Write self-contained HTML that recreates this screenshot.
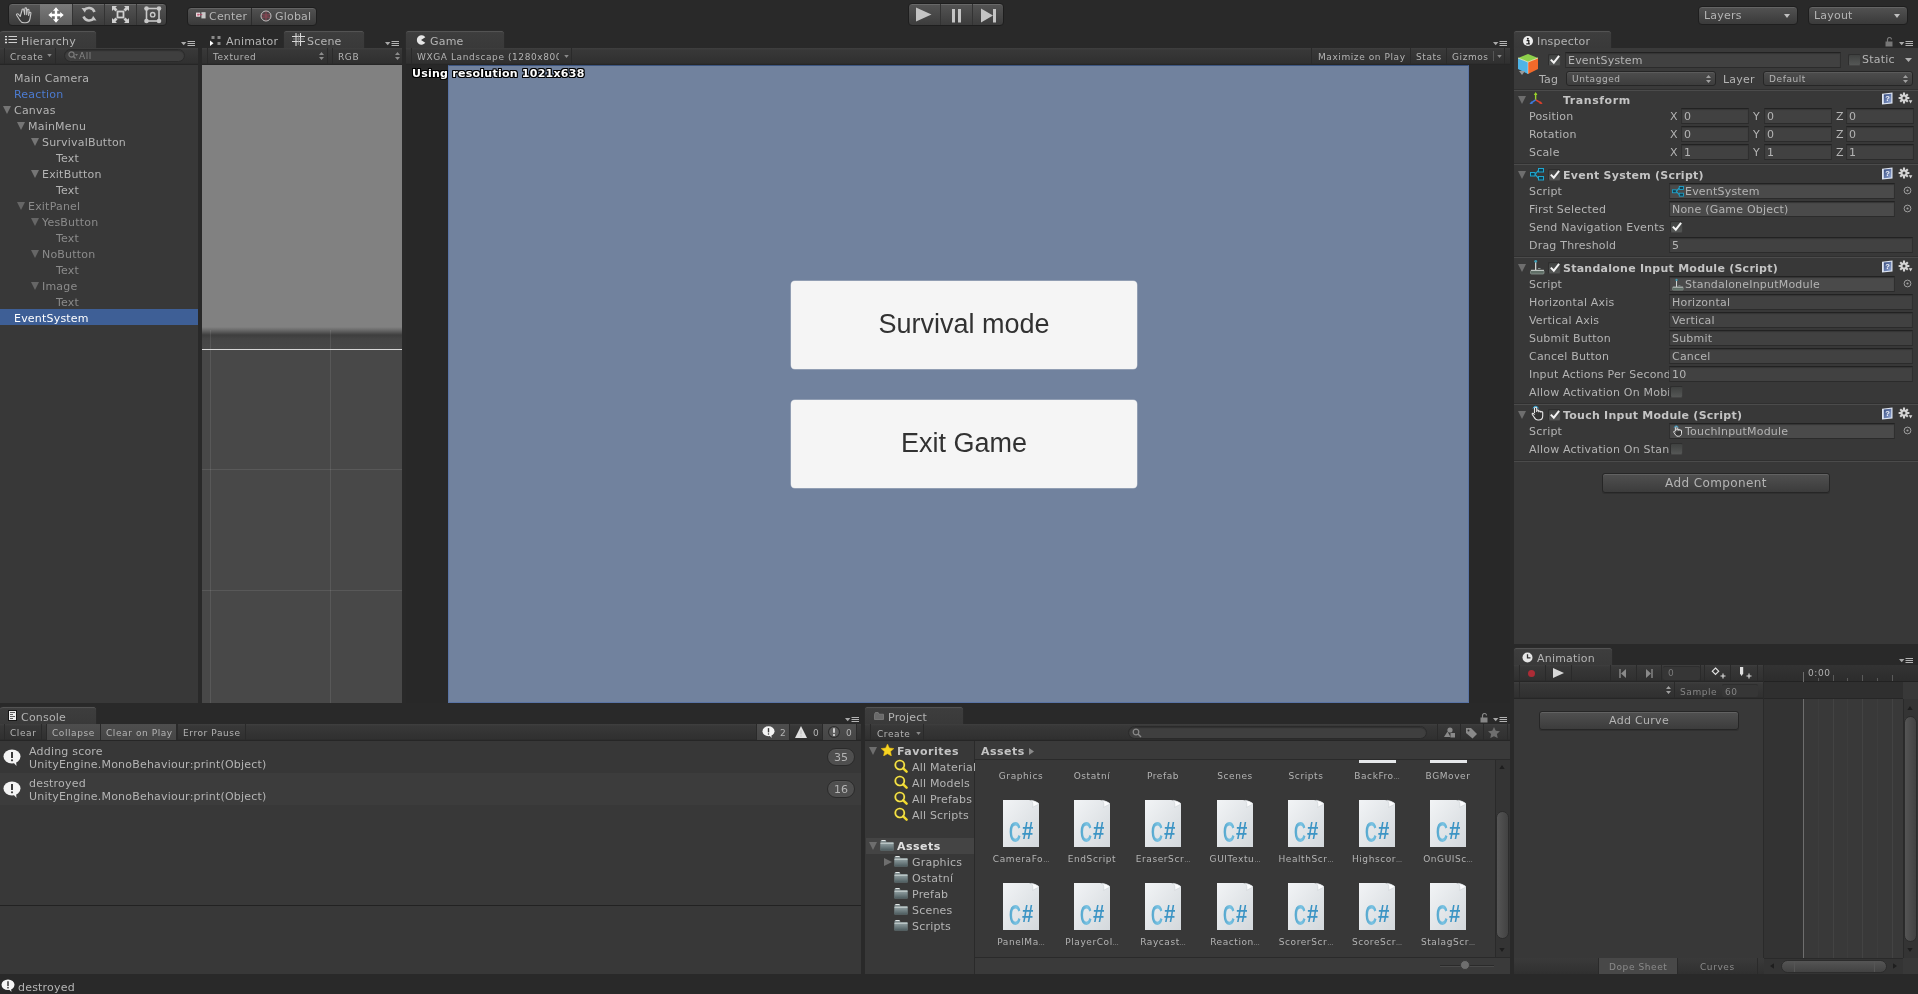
<!DOCTYPE html>
<html><head><meta charset="utf-8"><title>Unity</title>
<style>
html,body{margin:0;padding:0}
body{width:1918px;height:994px;overflow:hidden;background:#292929;position:relative;
 font-family:"DejaVu Sans","Liberation Sans",sans-serif;font-size:11px;letter-spacing:.2px;color:#b4b4b4;line-height:16px}
div,span,svg{position:absolute;box-sizing:border-box}
#root{left:0;top:0;width:1918px;height:994px;will-change:transform}
.t{white-space:nowrap;height:16px;line-height:16px;margin-top:1px}
.s{font-size:9px;letter-spacing:.58px}
.b{font-weight:bold;letter-spacing:.25px}
.panel{background:#383838}
.tab{height:19px;margin-top:-1px;background:linear-gradient(#444 0,#3d3d3d 2px,#393939 100%);border:1px solid #2b2b2b;border-bottom:none;border-radius:3px 3px 0 0;box-shadow:inset 0 1px 0 #535353}
.tabtxt{top:2px;line-height:17px;white-space:nowrap}
.tbar{height:17px;background:linear-gradient(#3f3f3f 0,#383838 2px,#303030 15px,#2a2a2a 16px,#222 17px)}
.tbtn{height:16px;top:0;line-height:16px;font-size:9px;letter-spacing:.58px;white-space:nowrap;border-left:1px solid #2a2a2a;border-right:1px solid #2a2a2a;padding:0 5px}
.tbtn.on{background:linear-gradient(#555,#484848)}
.menu{width:14px;height:6px}
.arrow{width:0;height:0;border-left:4.5px solid transparent;border-right:4.5px solid transparent;border-top:8px solid #757575}
.arrow.dim{border-top-color:#666}
.arrowr{width:0;height:0;border-top:4.5px solid transparent;border-bottom:4.5px solid transparent;border-left:8px solid #757575}
.fld{height:16px;background:#414141;border:1px solid #2f2f2f;border-top-color:#222;border-bottom-color:#2b2b2b;box-shadow:inset 0 1px 1px #353535;border-radius:1px;line-height:15px;white-space:nowrap;padding-left:2px;overflow:hidden}
.lbl{white-space:nowrap;line-height:16px;height:16px}
.sep{height:1px;background:#2a2a2a;border:0}
.chk{width:13px;height:12px;margin-top:1px;background:linear-gradient(#3f4140,#555756);border:1px solid #2e2e2e;border-right-color:#3c3c3c;border-bottom-color:#444;border-radius:2px}
.dim{color:#8c8c8c}

</style></head>
<body>
<div id="root">
<!-- top.html -->
<div id="topbar" style="left:0;top:0;width:1918px;height:31px;background:#292929"></div>
<!-- transform tools -->
<div style="left:8px;top:3px;width:159px;height:23px;border:1px solid #1e1e1e;border-radius:4px;background:linear-gradient(#545454,#3c3c3c);overflow:hidden;box-shadow:inset 0 1px 0 #686868">
  <div style="left:31px;top:0;width:1px;height:21px;background:#333"></div>
  <div style="left:63px;top:0;width:1px;height:21px;background:#333"></div>
  <div style="left:95px;top:0;width:1px;height:21px;background:#333"></div>
  <div style="left:127px;top:0;width:1px;height:21px;background:#333"></div>
  <div style="left:31px;top:0;width:32px;height:21px;background:linear-gradient(#7a7a7a,#5f5f5f)"></div>
</div>
<!-- hand -->
<svg style="left:15px;top:6px;width:18px;height:18px" viewBox="0 0 18 18"><path d="M5.2 10.5L3.3 8.2c-.9-1-2.3 0-1.6 1.100l3 4.700c1 1.7 2.3 2.8 4.3 2.800h1.500c2.6 0 4.1-1.7 4.5-4.200l.9-5.300c.2-1.2-1.3-1.5-1.6-.4l-.7 2.6.4-5.100c.1-1.2-1.5-1.4-1.7-.2l-.6 4.5-.1-5.900c0-1.2-1.7-1.2-1.7 0l-.2 5.9-1-5c-.2-1.2-1.8-.9-1.6.3z" fill="#3a3a3a" stroke="#c8c8c8" stroke-width="1.1" stroke-linejoin="round"/></svg>
<!-- move -->
<svg style="left:48px;top:7px;width:16px;height:16px" viewBox="0 0 16 16"><path d="M8 0.300l3 3.500H9.200v3h3V5l3.5 3-3.5 3V9.200h-3v3H11l-3 3.5-3-3.500h1.800v-3h-3V11L.3 8l3.5-3v1.800h3v-3H5z" fill="#fff"/></svg>
<!-- rotate -->
<svg style="left:81px;top:6px;width:16px;height:17px" viewBox="0 0 16 17"><path d="M13.5 6A6 6 0 0 0 3 4.5" fill="none" stroke="#c4c4c4" stroke-width="2.5"/><path d="M.5 2l4.8.3-1.3 4.500z" fill="#c4c4c4"/><path d="M2.5 10.500A6 6 0 0 0 13 12" fill="none" stroke="#c4c4c4" stroke-width="2.5"/><path d="M15.5 14.500l-4.8-.3 1.3-4.500z" fill="#c4c4c4"/></svg>
<!-- scale -->
<svg style="left:112px;top:6px;width:17px;height:17px" viewBox="0 0 17 17"><rect x="5.5" y="5.5" width="6" height="6" fill="none" stroke="#d0d0d0" stroke-width="1.8"/><path d="M0 0h5L3.5 1.5 5.5 3.5 3.5 5.5 1.5 3.5 0 5zM17 0v5L15.5 3.5 13.5 5.5 11.5 3.5 13.5 1.5 12 0zM0 17v-5l1.5 1.5 2-2 2 2-2 2L5 17zM17 17h-5l1.5-1.5-2-2 2-2 2 2L17 12z" fill="#d0d0d0"/></svg>
<!-- rect -->
<svg style="left:144px;top:6px;width:18px;height:18px" viewBox="0 0 18 18"><rect x="2.5" y="2.5" width="12.5" height="12.5" fill="none" stroke="#c8c8c8" stroke-width="1.6"/><circle cx="2.5" cy="2.5" r="2.3" fill="#c8c8c8"/><circle cx="15" cy="2.5" r="2.3" fill="#c8c8c8"/><circle cx="2.5" cy="15" r="2.3" fill="#c8c8c8"/><circle cx="15" cy="15" r="2.3" fill="#c8c8c8"/><circle cx="8.7" cy="8.7" r="2.2" fill="none" stroke="#c8c8c8" stroke-width="1.4"/></svg>
<!-- center/global -->
<div style="left:187px;top:7px;width:130px;height:19px;border:1px solid #1e1e1e;border-radius:4px;background:linear-gradient(#525252,#3a3a3a);box-shadow:inset 0 1px 0 #646464">
  <div style="left:63px;top:0;width:1px;height:17px;background:#2c2c2c"></div>
  <span class="t" style="left:21px;top:0">Center</span>
  <span class="t" style="left:87px;top:0">Global</span>
  <svg style="left:8px;top:4px;width:10px;height:7px" viewBox="0 0 12 8"><rect x="0" y="0.5" width="5" height="5" fill="#e8d8dc"/><rect x="1.5" y="2" width="2" height="2" fill="#c05070"/><rect x="6.5" y="0" width="5" height="7.5" fill="#c8c8c8"/><path d="M4 3h3.5" stroke="#b04060" stroke-width="1.2"/></svg>
  <svg style="left:72px;top:2px;width:12px;height:12px" viewBox="0 0 12 12"><circle cx="6" cy="6" r="5" fill="#4e4246" stroke="#c4c4c4" stroke-width="1"/><path d="M2 4.5c2 .8 6 .8 8 0M2 7.5c2-.8 6-.8 8 0M6 1.5v9" stroke="#a8485a" stroke-width=".7" fill="none"/></svg>
</div>
<!-- play controls -->
<div style="left:908px;top:3px;width:96px;height:23px;border:1px solid #1e1e1e;border-radius:4px;background:linear-gradient(#545454,#3c3c3c);box-shadow:inset 0 1px 0 #686868">
  <div style="left:31px;top:0;width:1px;height:21px;background:#333"></div>
  <div style="left:63px;top:0;width:1px;height:21px;background:#333"></div>
  <svg style="left:7px;top:3px;width:16px;height:15px" viewBox="0 0 16 15"><path d="M0 0.500l15.5 7L0 14.500z" fill="#c4c4c4"/></svg>
  <svg style="left:43px;top:5px;width:10px;height:14px" viewBox="0 0 10 14"><rect x="0" y="0" width="3" height="13.5" fill="#c4c4c4"/><rect x="6" y="0" width="3" height="13.5" fill="#c4c4c4"/></svg>
  <svg style="left:72px;top:4px;width:16px;height:15px" viewBox="0 0 16 15"><path d="M0 0.500l12 7L0 14.500z" fill="#c4c4c4"/><rect x="12" y="1" width="3" height="13.5" fill="#c4c4c4"/></svg>
</div>
<!-- layers / layout -->
<div style="left:1698px;top:6px;width:100px;height:19px;border:1px solid #1e1e1e;border-radius:4px;background:linear-gradient(#525252,#3a3a3a);box-shadow:inset 0 1px 0 #646464">
  <span class="t" style="left:5px;top:0">Layers</span>
  <svg style="left:85px;top:7px;width:7px;height:4px" viewBox="0 0 7 4"><path d="M0 0h6l-3 4z" fill="#c0c0c0"/></svg>
</div>
<div style="left:1808px;top:6px;width:100px;height:19px;border:1px solid #1e1e1e;border-radius:4px;background:linear-gradient(#525252,#3a3a3a);box-shadow:inset 0 1px 0 #646464">
  <span class="t" style="left:5px;top:0">Layout</span>
  <svg style="left:85px;top:7px;width:7px;height:4px" viewBox="0 0 7 4"><path d="M0 0h6l-3 4z" fill="#c0c0c0"/></svg>
</div>

<!-- hier.html -->
<div class="panel" style="left:0;top:48px;width:198px;height:655px"></div>
<div class="tab" style="left:0;top:31px;width:97px;border-left:none"><span class="tabtxt" style="left:21px">Hierarchy</span><svg style="left:5px;top:5px;width:12px;height:8px" viewBox="0 0 12 8"><path d="M0 .5h2M0 3.5h2M0 6.5h2" stroke="#e0e0e0" stroke-width="1.6"/><path d="M3.5 .5H12M3.5 3.5H12M3.5 6.5H12" stroke="#d0d0d0" stroke-width="1.2"/></svg></div>
<svg class="menu" style="left:181px;top:41px" viewBox="0 0 14 6"><path d="M0 1h5.4L2.7 4.2z" fill="#a8a8a8"/><path d="M6.5 .5h7.5M6.5 2.5h7.5M6.5 4.5h7.5" stroke="#b4b4b4" stroke-width="1"/></svg>
<div class="tbar" style="left:0;top:48px;width:198px"><div style="left:4px;top:0;width:1px;height:16px;background:#2a2a2a"></div><div style="left:55px;top:0;width:1px;height:16px;background:#2a2a2a"></div><span class="t s" style="left:10px;top:0">Create</span><svg style="left:47px;top:6px;width:5px;height:3px" viewBox="0 0 6 4"><path d="M0 0h6l-3 4z" fill="#8a8a8a"/></svg><div style="left:64px;top:1px;width:121px;height:13px;border-radius:7px;background:#3f3f3f;border:1px solid #2a2a2a;box-shadow:inset 0 1px 1px #303030"></div><svg style="left:68px;top:3px;width:10px;height:9px" viewBox="0 0 10 9"><circle cx="3.5" cy="3.5" r="2.6" fill="none" stroke="#7a7a7a" stroke-width="1.2"/><path d="M5.3 5.3L7.5 7.5" stroke="#7a7a7a" stroke-width="1.3"/><path d="M7 3h3L8.5 5z" fill="#7a7a7a"/></svg><span class="t s dim" style="left:79px;top:-1px;color:#858585">All</span></div>
<span class="t" style="left:14px;top:70px;">Main Camera</span>
<span class="t" style="left:14px;top:86px;color:#4c7bd0;">Reaction</span>
<div class="arrow" style="left:3px;top:106px"></div>
<span class="t" style="left:14px;top:102px;">Canvas</span>
<div class="arrow" style="left:17px;top:122px"></div>
<span class="t" style="left:28px;top:118px;">MainMenu</span>
<div class="arrow" style="left:31px;top:138px"></div>
<span class="t" style="left:42px;top:134px;">SurvivalButton</span>
<span class="t" style="left:56px;top:150px;">Text</span>
<div class="arrow" style="left:31px;top:170px"></div>
<span class="t" style="left:42px;top:166px;">ExitButton</span>
<span class="t" style="left:56px;top:182px;">Text</span>
<div class="arrow dim" style="left:17px;top:202px"></div>
<span class="t" style="left:28px;top:198px;color:#8b8b8b;">ExitPanel</span>
<div class="arrow dim" style="left:31px;top:218px"></div>
<span class="t" style="left:42px;top:214px;color:#8b8b8b;">YesButton</span>
<span class="t" style="left:56px;top:230px;color:#8b8b8b;">Text</span>
<div class="arrow dim" style="left:31px;top:250px"></div>
<span class="t" style="left:42px;top:246px;color:#8b8b8b;">NoButton</span>
<span class="t" style="left:56px;top:262px;color:#8b8b8b;">Text</span>
<div class="arrow dim" style="left:31px;top:282px"></div>
<span class="t" style="left:42px;top:278px;color:#8b8b8b;">Image</span>
<span class="t" style="left:56px;top:294px;color:#8b8b8b;">Text</span>
<div style="left:0;top:309px;width:198px;height:16px;background:#3e5f96"></div>
<span class="t" style="left:14px;top:310px;color:#fff;">EventSystem</span>
<!-- scene.html -->
<div class="panel" style="left:202px;top:48px;width:200px;height:655px"></div>
<span class="tabtxt" style="left:226px;top:33px">Animator</span><svg style="left:210px;top:36px;width:11px;height:10px" viewBox="0 0 11 10"><rect x="1.5" y="0" width="3" height="3" fill="#8a8a8a"/><rect x="7.5" y="0" width="3" height="3" fill="#8a8a8a"/><rect x="7.5" y="6" width="3" height="3" fill="#8a8a8a"/><path d="M0 4.5l3.5 2.750L0 10z" fill="#fff"/></svg>
<div class="tab" style="left:283px;top:31px;width:82px"><span class="tabtxt" style="left:23px">Scene</span><svg style="left:8px;top:2px;width:13px;height:13px" viewBox="0 0 13 13"><path d="M4 0v13M8.5 0v13M0 3.5h13M0 8.5h13" stroke="#d8d8d8" stroke-width="1.1"/><path d="M6.3 1v11M1 6h11" stroke="#9a9a9a" stroke-width=".7"/></svg></div>
<svg class="menu" style="left:385px;top:41px" viewBox="0 0 14 6"><path d="M0 1h5.4L2.7 4.2z" fill="#a8a8a8"/><path d="M6.5 .5h7.5M6.5 2.5h7.5M6.5 4.5h7.5" stroke="#b4b4b4" stroke-width="1"/></svg>
<div class="tbar" style="left:202px;top:48px;width:200px">
 <div style="left:5px;top:0;width:1px;height:16px;background:#2a2a2a"></div>
 <span class="t s" style="left:11px;top:0">Textured</span><svg style="left:117px;top:4px;width:5px;height:8px" viewBox="0 0 5 8"><path d="M0 3h5L2.5 0zM0 5h5L2.5 8z" fill="#8c8c8c"/></svg>
 <div style="left:125px;top:0;width:1px;height:16px;background:#2a2a2a"></div>
 <div style="left:130px;top:0;width:1px;height:16px;background:#2a2a2a"></div>
 <span class="t s" style="left:136px;top:0">RGB</span><svg style="left:193px;top:4px;width:5px;height:8px" viewBox="0 0 5 8"><path d="M0 3h5L2.5 0zM0 5h5L2.5 8z" fill="#8c8c8c"/></svg>
</div>
<div style="left:202px;top:65px;width:200px;height:638px;background:linear-gradient(#818181 0,#818181 262px,#6a6a6a 265px,#3e3e3e 270px,#454545 274px,#484848 285px,#484848 100%);overflow:hidden">
 <div style="left:8px;top:265px;width:1px;height:373px;background:rgba(255,255,255,.09)"></div>
 <div style="left:128px;top:265px;width:1px;height:373px;background:rgba(255,255,255,.09)"></div>
 <div style="left:0;top:284px;width:200px;height:1px;background:#d8d8d8"></div>
 <div style="left:0;top:404px;width:200px;height:1px;background:rgba(255,255,255,.09)"></div>
 <div style="left:0;top:525px;width:200px;height:1px;background:rgba(255,255,255,.09)"></div>
</div>

<!-- game.html -->
<div style="left:406px;top:48px;width:1104px;height:655px;background:#282828"></div>
<div class="tab" style="left:405px;top:31px;width:100px"><span class="tabtxt" style="left:24px">Game</span><svg style="left:10px;top:4px;width:10px;height:10px" viewBox="0 0 10 10"><path d="M9.3 2.2A4.7 4.7 0 1 0 9.3 7.8L5 5z" fill="#e6e6e6"/></svg></div>
<svg class="menu" style="left:1493px;top:41px" viewBox="0 0 14 6"><path d="M0 1h5.4L2.7 4.2z" fill="#a8a8a8"/><path d="M6.5 .5h7.5M6.5 2.5h7.5M6.5 4.5h7.5" stroke="#b4b4b4" stroke-width="1"/></svg>
<div class="tbar" style="left:406px;top:48px;width:1104px">
 <div style="left:5px;top:0;width:1px;height:16px;background:#2a2a2a"></div>
 <span class="t s" style="left:11px;top:0;width:142px;overflow:hidden">WXGA Landscape (1280x800)</span>
 <svg style="left:158px;top:7px;width:5px;height:3px" viewBox="0 0 6 4"><path d="M0 0h6l-3 4z" fill="#8a8a8a"/></svg>
 <div style="left:165px;top:0;width:1px;height:16px;background:#2a2a2a"></div>
 <div style="left:905px;top:0;width:1px;height:16px;background:#2a2a2a"></div>
 <span class="t s" style="left:912px;top:0">Maximize on Play</span>
 <div style="left:1004px;top:0;width:1px;height:16px;background:#2a2a2a"></div>
 <span class="t s" style="left:1010px;top:0">Stats</span>
 <div style="left:1040px;top:0;width:1px;height:16px;background:#2a2a2a"></div>
 <span class="t s" style="left:1046px;top:0">Gizmos</span>
 <div style="left:1087px;top:3px;width:1px;height:10px;background:#555"></div>
 <svg style="left:1091px;top:7px;width:5px;height:3px" viewBox="0 0 6 4"><path d="M0 0h6l-3 4z" fill="#8a8a8a"/></svg>
 <div style="left:1098px;top:0;width:1px;height:16px;background:#2a2a2a"></div>
</div>
<div style="left:448px;top:65px;width:1021px;height:638px;background:#71829e;border:1px solid #5a74a5;border-top-color:#3c5580"></div>
<div style="left:791px;top:281px;width:346px;height:88px;background:#f5f5f5;border-radius:4px;box-shadow:0 0 0 .5px rgba(245,245,245,.5)"></div>
<div style="left:791px;top:400px;width:346px;height:88px;background:#f5f5f5;border-radius:4px;box-shadow:0 0 0 .5px rgba(245,245,245,.5)"></div>
<span style="left:791px;top:281px;width:346px;height:88px;line-height:87px;text-align:center;font-family:'Liberation Sans',sans-serif;font-size:27px;letter-spacing:0;color:#323232">Survival mode</span>
<span style="left:791px;top:400px;width:346px;height:88px;line-height:87px;text-align:center;font-family:'Liberation Sans',sans-serif;font-size:27px;letter-spacing:0;color:#323232">Exit Game</span>
<span class="t b" style="left:412px;top:65px;color:#fff;text-shadow:1px 1px 0 #000,-1px -1px 0 #000,1px -1px 0 #000,-1px 1px 0 #000,0 1px 0 #000,1px 0 0 #000,0 -1px 0 #000,-1px 0 0 #000">Using resolution 1021x638</span>

<!-- insp.html -->
<div class="panel" style="left:1514px;top:48px;width:404px;height:596px"></div>
<div class="tab" style="left:1513px;top:31px;width:99px"><span class="tabtxt" style="left:23px">Inspector</span><svg style="left:9px;top:5px;width:10px;height:10px" viewBox="0 0 10 10"><circle cx="5" cy="5" r="5" fill="#ececec"/><circle cx="4.9" cy="2.7" r="1" fill="#222"/><path d="M3.6 4.6h2.2v3M3.3 7.8h3.6" stroke="#222" stroke-width="1.3" fill="none"/></svg></div>
<svg style="left:1885px;top:37px;width:9px;height:10px" viewBox="0 0 9 10"><path d="M2.5 5V2.5a2 2 0 0 1 4 0" fill="none" stroke="#777" stroke-width="1.2"/><rect x="0.5" y="4.5" width="7" height="5" fill="#777"/></svg>
<svg class="menu" style="left:1899px;top:41px" viewBox="0 0 14 6"><path d="M0 1h5.4L2.7 4.2z" fill="#a8a8a8"/><path d="M6.5 .5h7.5M6.5 2.5h7.5M6.5 4.5h7.5" stroke="#b4b4b4" stroke-width="1"/></svg>
<div style="left:1514px;top:48px;width:404px;height:42px;background:#3a3a3a"></div>
<svg style="left:1516px;top:52px;width:24px;height:24px" viewBox="0 0 24 24"><path d="M2 6l10-4 10 4-10 4z" fill="#8ed04b"/><path d="M2 6v11l10 5V10z" fill="#4eb4e6"/><path d="M22 6v11l-10 5V10z" fill="#f26a2a"/><path d="M2 6l10 4 10-4" fill="none" stroke="#f4f4c0" stroke-width=".8"/><path d="M12 10v12" stroke="#fff" stroke-width=".6" opacity=".6"/><path d="M3 19h6l-3 4z" fill="#999"/></svg>
<div class="chk" style="left:1548px;top:53px"></div>
<svg style="left:1549px;top:51px;width:13px;height:14px" viewBox="0 0 13 14"><path d="M1.8 8.6l3 3.1L10.1 4.9" fill="none" stroke="#f4f4f4" stroke-width="2"/></svg>
<div class="fld" style="left:1565px;top:52px;width:276px;height:16px;line-height:15px;padding-left:2px">EventSystem</div>
<div class="chk" style="left:1848px;top:53px"></div>
<span class="t" style="left:1862px;top:51px">Static</span>
<svg style="left:1905px;top:58px;width:7px;height:4px" viewBox="0 0 9 5"><path d="M0 0h9l-4.5 5z" fill="#b0b0b0"/></svg>
<span class="t" style="left:1539px;top:71px">Tag</span>
<div style="left:1566px;top:71px;width:150px;height:15px;border:1px solid #262626;border-radius:3px;background:linear-gradient(#4d4d4d,#3d3d3d);box-shadow:inset 0 1px 0 #5b5b5b"><span class="t s" style="left:5px;top:-2px">Untagged</span><svg style="left:139px;top:3px;width:5px;height:8px" viewBox="0 0 5 8"><path d="M0 3h5L2.5 0zM0 5h5L2.5 8z" fill="#a0a0a0"/></svg></div>
<span class="t" style="left:1723px;top:71px">Layer</span>
<div style="left:1763px;top:71px;width:150px;height:15px;border:1px solid #262626;border-radius:3px;background:linear-gradient(#4d4d4d,#3d3d3d);box-shadow:inset 0 1px 0 #5b5b5b"><span class="t s" style="left:5px;top:-2px">Default</span><svg style="left:139px;top:3px;width:5px;height:8px" viewBox="0 0 5 8"><path d="M0 3h5L2.5 0zM0 5h5L2.5 8z" fill="#a0a0a0"/></svg></div>
<div style="left:1514px;top:89px;width:404px;height:1px;background:#303030"></div><div style="left:1514px;top:90px;width:404px;height:1px;background:#4b4b4b"></div>
<div class="arrow" style="left:1518px;top:96px;border-top-color:#6e6e6e"></div>
<svg style="left:1529px;top:92px;width:15px;height:14px" viewBox="0 0 16 16"><path d="M7 9V1.5" stroke="#9cd42a" stroke-width="1.6"/><path d="M7 0l2 3.5h-4z" fill="#9cd42a"/><path d="M7 9l6 3.5" stroke="#e0402c" stroke-width="1.6"/><path d="M15 13.6l-3.8-.3 1.6-2.6z" fill="#e0402c"/><path d="M7 9l-5 3.5" stroke="#3d7be0" stroke-width="1.6"/><path d="M0 13.6l3.8-.3-1.6-2.6z" fill="#3d7be0"/></svg>
<span class="t b" style="left:1563px;top:92px;color:#c4c4c4;letter-spacing:.55px">Transform</span>
<svg style="left:1881px;top:92px;width:13px;height:13px" viewBox="0 0 13 13"><defs><linearGradient id="hg" x1="0" y1="0" x2="1" y2="1"><stop offset="0" stop-color="#364a7c"/><stop offset="1" stop-color="#93a8d6"/></linearGradient></defs><path d="M1 1.8L11.5 .6V11.4L1 12.4z" fill="#dfe6f2"/><path d="M2.8 2.6L10.3 1.8V10.4L2.8 11.2z" fill="url(#hg)"/><text x="6.6" y="9.4" font-size="7.5" font-family="Liberation Sans,sans-serif" font-weight="bold" text-anchor="middle" fill="#f2f5fb">?</text></svg>
<svg style="left:1898px;top:92px;width:15px;height:13px" viewBox="0 0 15 13"><g stroke="#d4d4d4" stroke-width="2.1"><path d="M6 .6v10.8M.6 6h10.8M2.2 2.2l7.6 7.6M9.8 2.2l-7.6 7.6"/></g><circle cx="6" cy="6" r="3.6" fill="#d4d4d4"/><circle cx="6" cy="6" r="1.5" fill="#3a3a3a"/><path d="M10.8 8.3h3.6l-1.8 3.2z" fill="#d4d4d4"/></svg>
<span class="t" style="left:1529px;top:108px;">Position</span>
<span class="t" style="left:1670px;top:108px">X</span>
<div class="fld" style="left:1681px;top:108px;width:68px">0</div>
<span class="t" style="left:1753px;top:108px">Y</span>
<div class="fld" style="left:1764px;top:108px;width:68px">0</div>
<span class="t" style="left:1836px;top:108px">Z</span>
<div class="fld" style="left:1846px;top:108px;width:68px">0</div>
<span class="t" style="left:1529px;top:126px;">Rotation</span>
<span class="t" style="left:1670px;top:126px">X</span>
<div class="fld" style="left:1681px;top:126px;width:68px">0</div>
<span class="t" style="left:1753px;top:126px">Y</span>
<div class="fld" style="left:1764px;top:126px;width:68px">0</div>
<span class="t" style="left:1836px;top:126px">Z</span>
<div class="fld" style="left:1846px;top:126px;width:68px">0</div>
<span class="t" style="left:1529px;top:144px;">Scale</span>
<span class="t" style="left:1670px;top:144px">X</span>
<div class="fld" style="left:1681px;top:144px;width:68px">1</div>
<span class="t" style="left:1753px;top:144px">Y</span>
<div class="fld" style="left:1764px;top:144px;width:68px">1</div>
<span class="t" style="left:1836px;top:144px">Z</span>
<div class="fld" style="left:1846px;top:144px;width:68px">1</div>
<div style="left:1514px;top:163px;width:404px;height:1px;background:#303030"></div><div style="left:1514px;top:164px;width:404px;height:1px;background:#4b4b4b"></div>
<div class="arrow" style="left:1518px;top:171px;border-top-color:#6e6e6e"></div>
<svg style="left:1530px;top:168px;width:14px;height:13px" viewBox="0 0 14 13"><path d="M5 6.3L8.5 2.3M5 6.3L8.5 10.3" stroke="#1fa6cf" stroke-width="1.2" fill="none"/><rect x=".5" y="4.5" width="4.5" height="3.5" fill="#0e3d4e" stroke="#1fa6cf"/><rect x="8.5" y=".5" width="5" height="3.5" fill="#0e3d4e" stroke="#1fa6cf"/><rect x="8.5" y="8.5" width="5" height="3.5" fill="#0e3d4e" stroke="#1fa6cf"/></svg>
<div class="chk" style="left:1548px;top:168px"></div>
<svg style="left:1549px;top:166px;width:13px;height:14px" viewBox="0 0 13 14"><path d="M1.8 8.6l3 3.1L10.1 4.9" fill="none" stroke="#f4f4f4" stroke-width="2"/></svg>
<span class="t b" style="left:1563px;top:167px;color:#c4c4c4">Event System (Script)</span>
<svg style="left:1881px;top:167px;width:13px;height:13px" viewBox="0 0 13 13"><defs><linearGradient id="hg" x1="0" y1="0" x2="1" y2="1"><stop offset="0" stop-color="#364a7c"/><stop offset="1" stop-color="#93a8d6"/></linearGradient></defs><path d="M1 1.8L11.5 .6V11.4L1 12.4z" fill="#dfe6f2"/><path d="M2.8 2.6L10.3 1.8V10.4L2.8 11.2z" fill="url(#hg)"/><text x="6.6" y="9.4" font-size="7.5" font-family="Liberation Sans,sans-serif" font-weight="bold" text-anchor="middle" fill="#f2f5fb">?</text></svg>
<svg style="left:1898px;top:167px;width:15px;height:13px" viewBox="0 0 15 13"><g stroke="#d4d4d4" stroke-width="2.1"><path d="M6 .6v10.8M.6 6h10.8M2.2 2.2l7.6 7.6M9.8 2.2l-7.6 7.6"/></g><circle cx="6" cy="6" r="3.6" fill="#d4d4d4"/><circle cx="6" cy="6" r="1.5" fill="#3a3a3a"/><path d="M10.8 8.3h3.6l-1.8 3.2z" fill="#d4d4d4"/></svg>
<span class="t" style="left:1529px;top:183px;">Script</span>
<div class="fld" style="left:1669px;top:183px;width:226px;background:#4a4a4a;padding-left:15px">EventSystem</div>
<svg style="left:1672px;top:186px;width:12px;height:11px" viewBox="0 0 14 13"><path d="M5 6.3L8.5 2.3M5 6.3L8.5 10.3" stroke="#1fa6cf" stroke-width="1.2" fill="none"/><rect x=".5" y="4.5" width="4.5" height="3.5" fill="#0e3d4e" stroke="#1fa6cf"/><rect x="8.5" y=".5" width="5" height="3.5" fill="#0e3d4e" stroke="#1fa6cf"/><rect x="8.5" y="8.5" width="5" height="3.5" fill="#0e3d4e" stroke="#1fa6cf"/></svg>
<svg style="left:1903px;top:186px;width:9px;height:9px" viewBox="0 0 9 9"><circle cx="4.5" cy="4.5" r="3.4" fill="none" stroke="#a0a0a0" stroke-width="1"/><circle cx="4.5" cy="4.5" r="1.1" fill="#a0a0a0"/></svg>
<span class="t" style="left:1529px;top:201px;">First Selected</span>
<div class="fld" style="left:1669px;top:201px;width:226px;background:#4a4a4a">None (Game Object)</div>
<svg style="left:1903px;top:204px;width:9px;height:9px" viewBox="0 0 9 9"><circle cx="4.5" cy="4.5" r="3.4" fill="none" stroke="#a0a0a0" stroke-width="1"/><circle cx="4.5" cy="4.5" r="1.1" fill="#a0a0a0"/></svg>
<span class="t" style="left:1529px;top:219px;">Send Navigation Events</span>
<div class="chk" style="left:1670px;top:220px"></div>
<svg style="left:1671px;top:218px;width:13px;height:14px" viewBox="0 0 13 14"><path d="M1.8 8.6l3 3.1L10.1 4.9" fill="none" stroke="#f4f4f4" stroke-width="2"/></svg>
<span class="t" style="left:1529px;top:237px;">Drag Threshold</span>
<div class="fld" style="left:1669px;top:237px;width:244px">5</div>
<div style="left:1514px;top:256px;width:404px;height:1px;background:#303030"></div><div style="left:1514px;top:257px;width:404px;height:1px;background:#4b4b4b"></div>
<div class="arrow" style="left:1518px;top:264px;border-top-color:#6e6e6e"></div>
<svg style="left:1530px;top:259px;width:15px;height:16px" viewBox="0 0 15 16"><rect x=".5" y="11.5" width="13.5" height="3.5" rx="1" fill="#5f6e66" stroke="#8a968f" stroke-width=".8"/><path d="M1 11.3h13" stroke="#cfd6d2" stroke-width="1"/><path d="M5.7 11V3" stroke="#e8ecea" stroke-width="1.1"/><circle cx="5.7" cy="2.3" r="1.4" fill="#3f9db5"/><path d="M8 9.5h2.5" stroke="#9aa" stroke-width=".8"/></svg>
<div class="chk" style="left:1548px;top:261px"></div>
<svg style="left:1549px;top:259px;width:13px;height:14px" viewBox="0 0 13 14"><path d="M1.8 8.6l3 3.1L10.1 4.9" fill="none" stroke="#f4f4f4" stroke-width="2"/></svg>
<span class="t b" style="left:1563px;top:260px;color:#c4c4c4">Standalone Input Module (Script)</span>
<svg style="left:1881px;top:260px;width:13px;height:13px" viewBox="0 0 13 13"><defs><linearGradient id="hg" x1="0" y1="0" x2="1" y2="1"><stop offset="0" stop-color="#364a7c"/><stop offset="1" stop-color="#93a8d6"/></linearGradient></defs><path d="M1 1.8L11.5 .6V11.4L1 12.4z" fill="#dfe6f2"/><path d="M2.8 2.6L10.3 1.8V10.4L2.8 11.2z" fill="url(#hg)"/><text x="6.6" y="9.4" font-size="7.5" font-family="Liberation Sans,sans-serif" font-weight="bold" text-anchor="middle" fill="#f2f5fb">?</text></svg>
<svg style="left:1898px;top:260px;width:15px;height:13px" viewBox="0 0 15 13"><g stroke="#d4d4d4" stroke-width="2.1"><path d="M6 .6v10.8M.6 6h10.8M2.2 2.2l7.6 7.6M9.8 2.2l-7.6 7.6"/></g><circle cx="6" cy="6" r="3.6" fill="#d4d4d4"/><circle cx="6" cy="6" r="1.5" fill="#3a3a3a"/><path d="M10.8 8.3h3.6l-1.8 3.2z" fill="#d4d4d4"/></svg>
<span class="t" style="left:1529px;top:276px;">Script</span>
<div class="fld" style="left:1669px;top:276px;width:226px;background:#4a4a4a;padding-left:15px">StandaloneInputModule</div>
<svg style="left:1672px;top:278px;width:12px;height:13px" viewBox="0 0 15 16"><rect x=".5" y="11.5" width="13.5" height="3.5" rx="1" fill="#5f6e66" stroke="#8a968f" stroke-width=".8"/><path d="M1 11.3h13" stroke="#cfd6d2" stroke-width="1"/><path d="M5.7 11V3" stroke="#e8ecea" stroke-width="1.1"/><circle cx="5.7" cy="2.3" r="1.4" fill="#3f9db5"/><path d="M8 9.5h2.5" stroke="#9aa" stroke-width=".8"/></svg>
<svg style="left:1903px;top:279px;width:9px;height:9px" viewBox="0 0 9 9"><circle cx="4.5" cy="4.5" r="3.4" fill="none" stroke="#a0a0a0" stroke-width="1"/><circle cx="4.5" cy="4.5" r="1.1" fill="#a0a0a0"/></svg>
<span class="t" style="left:1529px;top:294px;">Horizontal Axis</span>
<div class="fld" style="left:1669px;top:294px;width:244px">Horizontal</div>
<span class="t" style="left:1529px;top:312px;">Vertical Axis</span>
<div class="fld" style="left:1669px;top:312px;width:244px">Vertical</div>
<span class="t" style="left:1529px;top:330px;">Submit Button</span>
<div class="fld" style="left:1669px;top:330px;width:244px">Submit</div>
<span class="t" style="left:1529px;top:348px;">Cancel Button</span>
<div class="fld" style="left:1669px;top:348px;width:244px">Cancel</div>
<span class="t" style="left:1529px;top:366px;width:140px;overflow:hidden;">Input Actions Per Second</span>
<div class="fld" style="left:1669px;top:366px;width:244px">10</div>
<span class="t" style="left:1529px;top:384px;width:140px;overflow:hidden;">Allow Activation On Mobile</span>
<div class="chk" style="left:1670px;top:385px"></div>
<div style="left:1514px;top:403px;width:404px;height:1px;background:#303030"></div><div style="left:1514px;top:404px;width:404px;height:1px;background:#4b4b4b"></div>
<div class="arrow" style="left:1518px;top:411px;border-top-color:#6e6e6e"></div>
<svg style="left:1530px;top:405px;width:16px;height:16px" viewBox="0 0 16 16"><path d="M4.5 8V3.2a1.1 1.1 0 0 1 2.2 0V7M6.7 7V6a1 1 0 0 1 2 0v1.2M8.7 7a1 1 0 0 1 2 0v.6M10.7 7.6a1 1 0 0 1 2 0V11c0 2.5-1.5 4-4 4H8c-2 0-3-1-4-3L2.3 9.5c-.5-1 .8-1.8 1.5-.8l.7 1" fill="#333" stroke="#e8e8e8" stroke-width="1.1"/><path d="M3 3.5a2.7 2.7 0 0 1 5.3 0" fill="none" stroke="#35a7d8" stroke-width="1"/></svg>
<div class="chk" style="left:1548px;top:408px"></div>
<svg style="left:1549px;top:406px;width:13px;height:14px" viewBox="0 0 13 14"><path d="M1.8 8.6l3 3.1L10.1 4.9" fill="none" stroke="#f4f4f4" stroke-width="2"/></svg>
<span class="t b" style="left:1563px;top:407px;color:#c4c4c4">Touch Input Module (Script)</span>
<svg style="left:1881px;top:407px;width:13px;height:13px" viewBox="0 0 13 13"><defs><linearGradient id="hg" x1="0" y1="0" x2="1" y2="1"><stop offset="0" stop-color="#364a7c"/><stop offset="1" stop-color="#93a8d6"/></linearGradient></defs><path d="M1 1.8L11.5 .6V11.4L1 12.4z" fill="#dfe6f2"/><path d="M2.8 2.6L10.3 1.8V10.4L2.8 11.2z" fill="url(#hg)"/><text x="6.6" y="9.4" font-size="7.5" font-family="Liberation Sans,sans-serif" font-weight="bold" text-anchor="middle" fill="#f2f5fb">?</text></svg>
<svg style="left:1898px;top:407px;width:15px;height:13px" viewBox="0 0 15 13"><g stroke="#d4d4d4" stroke-width="2.1"><path d="M6 .6v10.8M.6 6h10.8M2.2 2.2l7.6 7.6M9.8 2.2l-7.6 7.6"/></g><circle cx="6" cy="6" r="3.6" fill="#d4d4d4"/><circle cx="6" cy="6" r="1.5" fill="#3a3a3a"/><path d="M10.8 8.3h3.6l-1.8 3.2z" fill="#d4d4d4"/></svg>
<span class="t" style="left:1529px;top:423px;">Script</span>
<div class="fld" style="left:1669px;top:423px;width:226px;background:#4a4a4a;padding-left:15px">TouchInputModule</div>
<svg style="left:1672px;top:425px;width:12px;height:12px" viewBox="0 0 16 16"><path d="M4.5 8V3.2a1.1 1.1 0 0 1 2.2 0V7M6.7 7V6a1 1 0 0 1 2 0v1.2M8.7 7a1 1 0 0 1 2 0v.6M10.7 7.6a1 1 0 0 1 2 0V11c0 2.5-1.5 4-4 4H8c-2 0-3-1-4-3L2.3 9.5c-.5-1 .8-1.8 1.5-.8l.7 1" fill="#333" stroke="#e8e8e8" stroke-width="1.3"/><path d="M3 3.5a2.7 2.7 0 0 1 5.3 0" fill="none" stroke="#35a7d8" stroke-width="1.2"/></svg>
<svg style="left:1903px;top:426px;width:9px;height:9px" viewBox="0 0 9 9"><circle cx="4.5" cy="4.5" r="3.4" fill="none" stroke="#a0a0a0" stroke-width="1"/><circle cx="4.5" cy="4.5" r="1.1" fill="#a0a0a0"/></svg>
<span class="t" style="left:1529px;top:441px;width:140px;overflow:hidden;">Allow Activation On Standalone</span>
<div class="chk" style="left:1670px;top:442px"></div>
<div style="left:1514px;top:460px;width:404px;height:1px;background:#303030"></div><div style="left:1514px;top:461px;width:404px;height:1px;background:#4b4b4b"></div>
<div style="left:1602px;top:473px;width:228px;height:20px;border:1px solid #262626;border-radius:3px;background:linear-gradient(#505050,#3c3c3c);box-shadow:inset 0 1px 0 #626262,0 1px 0 #303030;text-align:center;line-height:19px;font-size:12px;letter-spacing:.4px">Add Component</div>
<!-- anim.html -->
<div class="panel" style="left:1514px;top:665px;width:404px;height:309px"></div>
<div class="tab" style="left:1513px;top:648px;width:100px"><span class="tabtxt" style="left:23px">Animation</span><svg style="left:8px;top:4px;width:11px;height:11px" viewBox="0 0 11 11"><circle cx="5.5" cy="5.5" r="5" fill="#e6e6e6"/><path d="M5.5 2.2v3.6h3" stroke="#333" stroke-width="1.3" fill="none"/></svg></div>
<svg class="menu" style="left:1899px;top:658px" viewBox="0 0 14 6"><path d="M0 1h5.4L2.7 4.2z" fill="#a8a8a8"/><path d="M6.5 .5h7.5M6.5 2.5h7.5M6.5 4.5h7.5" stroke="#b4b4b4" stroke-width="1"/></svg>
<div style="left:1764px;top:665px;width:139px;height:293px;background:#333"></div>
<div style="left:1803px;top:665px;width:100px;height:293px;background:#393939"></div>
<div class="tbar" style="left:1514px;top:665px;width:250px"></div>
<div style="left:1519px;top:665px;width:1px;height:16px;background:#2a2a2a"></div>
<div style="left:1545px;top:665px;width:1px;height:16px;background:#2a2a2a"></div>
<div style="left:1571px;top:665px;width:1px;height:16px;background:#2a2a2a"></div>
<div style="left:1610px;top:665px;width:1px;height:16px;background:#2a2a2a"></div>
<div style="left:1636px;top:665px;width:1px;height:16px;background:#2a2a2a"></div>
<div style="left:1661px;top:665px;width:1px;height:16px;background:#2a2a2a"></div>
<div style="left:1700px;top:665px;width:1px;height:16px;background:#2a2a2a"></div>
<div style="left:1704px;top:665px;width:1px;height:16px;background:#2a2a2a"></div>
<div style="left:1730px;top:665px;width:1px;height:16px;background:#2a2a2a"></div>
<div style="left:1757px;top:665px;width:1px;height:16px;background:#2a2a2a"></div>
<div style="left:1528px;top:670px;width:7px;height:7px;border-radius:4px;background:#ac2c36"></div>
<svg style="left:1553px;top:668px;width:11px;height:10px" viewBox="0 0 11 10"><path d="M0 0l11 5-11 5z" fill="#d8d8d8"/></svg>
<svg style="left:1619px;top:669px;width:8px;height:9px" viewBox="0 0 8 9"><path d="M1 0v9" stroke="#8a8a8a" stroke-width="1.4"/><path d="M7 0v9L2 4.5z" fill="#8a8a8a"/></svg>
<svg style="left:1645px;top:669px;width:8px;height:9px" viewBox="0 0 8 9"><path d="M7 0v9" stroke="#8a8a8a" stroke-width="1.4"/><path d="M1 0v9l5-4.5z" fill="#8a8a8a"/></svg>
<div style="left:1663px;top:666px;width:37px;height:14px;background:#363636;border-top:1px solid #2e2e2e;border-radius:2px"></div>
<span class="t s" style="left:1668px;top:664px;color:#7a7a7a">0</span>
<svg style="left:1711px;top:667px;width:16px;height:13px" viewBox="0 0 16 13"><path d="M4.5 1l3.2 3.2-3.2 3.2-3.2-3.2z" fill="none" stroke="#e0e0e0" stroke-width="1.2"/><path d="M12 6.5v5M9.5 9h5" stroke="#e0e0e0" stroke-width="1.1"/></svg>
<svg style="left:1738px;top:667px;width:16px;height:13px" viewBox="0 0 16 13"><path d="M2 0h3.2v6.5L3.6 9 2 6.5z" fill="#e0e0e0"/><path d="M11 6.5v5M8.5 9h5" stroke="#e0e0e0" stroke-width="1.1"/></svg>
<div style="left:1764px;top:665px;width:154px;height:17px;background:linear-gradient(#333,#2c2c2c)"></div>
<div style="left:1764px;top:681px;width:154px;height:1px;background:#222"></div>
<span class="t s" style="left:1808px;top:664px;color:#b0b0b0">0:00</span>
<div style="left:1803px;top:672px;width:1px;height:286px;background:#6e6e6e"></div>
<div style="left:1818px;top:678px;width:1px;height:3px;background:#5a5a5a"></div>
<div style="left:1818px;top:699px;width:1px;height:259px;background:rgba(255,255,255,0.025)"></div>
<div style="left:1833px;top:675px;width:1px;height:6px;background:#5a5a5a"></div>
<div style="left:1833px;top:699px;width:1px;height:259px;background:rgba(255,255,255,0.05)"></div>
<div style="left:1847px;top:678px;width:1px;height:3px;background:#5a5a5a"></div>
<div style="left:1847px;top:699px;width:1px;height:259px;background:rgba(255,255,255,0.025)"></div>
<div style="left:1862px;top:675px;width:1px;height:6px;background:#5a5a5a"></div>
<div style="left:1862px;top:699px;width:1px;height:259px;background:rgba(255,255,255,0.05)"></div>
<div style="left:1877px;top:678px;width:1px;height:3px;background:#5a5a5a"></div>
<div style="left:1877px;top:699px;width:1px;height:259px;background:rgba(255,255,255,0.025)"></div>
<div style="left:1892px;top:675px;width:1px;height:6px;background:#5a5a5a"></div>
<div style="left:1892px;top:699px;width:1px;height:259px;background:rgba(255,255,255,0.05)"></div>
<div class="tbar" style="left:1514px;top:682px;width:250px"></div>
<div style="left:1764px;top:682px;width:139px;height:17px;background:#2f2f2f;border-bottom:1px solid #262626"></div>
<div style="left:1519px;top:682px;width:1px;height:16px;background:#2a2a2a"></div>
<svg style="left:1666px;top:686px;width:5px;height:8px" viewBox="0 0 5 8"><path d="M0 3h5L2.5 0zM0 5h5L2.5 8z" fill="#a0a0a0"/></svg>
<div style="left:1674px;top:682px;width:1px;height:16px;background:#2a2a2a"></div>
<span class="t s" style="left:1680px;top:683px;color:#858585">Sample</span>
<div style="left:1722px;top:684px;width:36px;height:13px;background:#363636;border-top:1px solid #2e2e2e;border-radius:2px"></div>
<span class="t s" style="left:1725px;top:683px;color:#858585">60</span>
<div style="left:1763px;top:665px;width:1px;height:309px;background:#2a2a2a"></div>
<div style="left:1539px;top:711px;width:200px;height:19px;border:1px solid #262626;border-radius:3px;background:linear-gradient(#505050,#3c3c3c);box-shadow:inset 0 1px 0 #626262,0 1px 0 #303030;text-align:center;line-height:18px;font-size:11px;letter-spacing:.3px">Add Curve</div>
<div class="tbar" style="left:1514px;top:958px;width:250px;height:16px;background:linear-gradient(#3a3a3a,#303030)"></div>
<div style="left:1598px;top:958px;width:80px;height:16px;background:#484848;border-left:1px solid #2a2a2a;border-right:1px solid #2a2a2a"></div>
<span class="t s" style="left:1609px;top:958px;color:#8a8a8a">Dope Sheet</span>
<span class="t s" style="left:1700px;top:958px;color:#8a8a8a">Curves</span>
<div style="left:1757px;top:958px;width:1px;height:16px;background:#2a2a2a"></div>
<div style="left:1764px;top:958px;width:139px;height:16px;background:#343434;border-top:1px solid #2a2a2a"></div>
<svg style="left:1770px;top:963px;width:4px;height:6px" viewBox="0 0 6 8"><path d="M6 0v8L0 4z" fill="#1e1e1e"/></svg>
<svg style="left:1893px;top:963px;width:4px;height:6px" viewBox="0 0 6 8"><path d="M0 0v8l6-4z" fill="#1e1e1e"/></svg>
<div style="left:1781px;top:960px;width:106px;height:13px;border-radius:7px;background:linear-gradient(#555,#424242);border:1px solid #2c2c2c"></div>
<div style="left:1794px;top:961px;width:1px;height:11px;background:#555"></div><div style="left:1874px;top:961px;width:1px;height:11px;background:#555"></div>
<div style="left:1903px;top:699px;width:15px;height:259px;background:#343434;border-left:1px solid #2a2a2a"></div>
<svg style="left:1907px;top:706px;width:6px;height:4px" viewBox="0 0 8 6"><path d="M0 6h8L4 0z" fill="#1e1e1e"/></svg>
<svg style="left:1907px;top:948px;width:6px;height:4px" viewBox="0 0 8 6"><path d="M0 0h8L4 6z" fill="#1e1e1e"/></svg>
<div style="left:1904px;top:716px;width:13px;height:226px;border-radius:7px;background:linear-gradient(90deg,#555,#424242);border:1px solid #2c2c2c"></div>
<div style="left:1903px;top:958px;width:15px;height:16px;background:#383838"></div>
<!-- console.html -->
<div class="panel" style="left:0;top:724px;width:861px;height:250px"></div>
<div class="tab" style="left:0;top:707px;width:97px;border-left:none"><span class="tabtxt" style="left:21px">Console</span><svg style="left:8px;top:3px;width:9px;height:11px" viewBox="0 0 9 11"><rect x=".5" y=".5" width="8" height="10" fill="#ececec" stroke="#161616"/><path d="M2 2.5h5M2 4.5h3M2 6.5h5M2 8.5h3" stroke="#5a5a5a" stroke-width="1"/></svg></div>
<svg class="menu" style="left:845px;top:717px" viewBox="0 0 14 6"><path d="M0 1h5.4L2.7 4.2z" fill="#a8a8a8"/><path d="M6.5 .5h7.5M6.5 2.5h7.5M6.5 4.5h7.5" stroke="#b4b4b4" stroke-width="1"/></svg>
<div class="tbar" style="left:0;top:724px;width:861px"></div>
<div style="left:4px;top:724px;width:38px;height:16px;border-left:1px solid #2a2a2a;border-right:1px solid #2a2a2a;"></div>
<span class="t s" style="left:10px;top:724px">Clear</span>
<div style="left:46px;top:724px;width:55px;height:16px;border-left:1px solid #2a2a2a;border-right:1px solid #2a2a2a;background:linear-gradient(#4e4e4e,#464646);"></div>
<span class="t s" style="left:52px;top:724px">Collapse</span>
<div style="left:100px;top:724px;width:77px;height:16px;border-left:1px solid #2a2a2a;border-right:1px solid #2a2a2a;background:linear-gradient(#4e4e4e,#464646);"></div>
<span class="t s" style="left:106px;top:724px">Clear on Play</span>
<div style="left:177px;top:724px;width:69px;height:16px;border-left:1px solid #2a2a2a;border-right:1px solid #2a2a2a;"></div>
<span class="t s" style="left:183px;top:724px">Error Pause</span>
<div style="left:756px;top:724px;width:34px;height:16px;border-left:1px solid #2a2a2a;border-right:1px solid #2a2a2a;background:linear-gradient(#4e4e4e,#464646);"></div>
<span class="t s" style="left:764px;top:724px"></span>
<div style="left:789px;top:724px;width:34px;height:16px;border-left:1px solid #2a2a2a;border-right:1px solid #2a2a2a;"></div>
<span class="t s" style="left:799px;top:724px"></span>
<div style="left:822px;top:724px;width:35px;height:16px;border-left:1px solid #2a2a2a;border-right:1px solid #2a2a2a;background:linear-gradient(#4e4e4e,#464646);"></div>
<span class="t s" style="left:833px;top:724px"></span>
<svg style="left:762px;top:726px;width:13px;height:12px" viewBox="0 0 18 17"><ellipse cx="9" cy="7.5" rx="8.5" ry="7" fill="#f4f4f4"/><path d="M10 13l3.5 4-.5-5z" fill="#f4f4f4"/><path d="M9 3v6" stroke="#3a3a3a" stroke-width="2"/><circle cx="9" cy="11.3" r="1.1" fill="#3a3a3a"/></svg>
<span class="t s" style="left:780px;top:724px">2</span>
<svg style="left:795px;top:726px;width:12px;height:12px" viewBox="0 0 11 11"><path d="M5.5 0L11 11H0z" fill="#e0e0e0"/><path d="M5.5 4v3.6" stroke="#c4c4c4" stroke-width="1.2"/><circle cx="5.5" cy="9.2" r=".7" fill="#c4c4c4"/></svg>
<span class="t s" style="left:813px;top:724px">0</span>
<svg style="left:828px;top:726px;width:12px;height:12px" viewBox="0 0 11 11"><circle cx="5.5" cy="5.5" r="5" fill="#5c5c5c" stroke="#2c2c2c"/><path d="M5.5 2v4.2" stroke="#e8e8e8" stroke-width="1.5"/><circle cx="5.5" cy="8.3" r=".9" fill="#e8e8e8"/></svg>
<span class="t s" style="left:846px;top:724px">0</span>
<div style="left:0;top:741px;width:861px;height:32px;background:#373737"></div>
<div style="left:0;top:773px;width:861px;height:32px;background:#3c3c3c"></div>
<svg style="left:3px;top:749px;width:18px;height:17px" viewBox="0 0 18 17"><ellipse cx="9" cy="7.5" rx="8.5" ry="7" fill="#f4f4f4"/><path d="M10 13l3.5 4-.5-5z" fill="#f4f4f4"/><path d="M9 3v6" stroke="#3a3a3a" stroke-width="2"/><circle cx="9" cy="11.3" r="1.1" fill="#3a3a3a"/></svg>
<span class="t" style="left:29px;top:744px;line-height:13px;height:13px">Adding score</span>
<span class="t" style="left:29px;top:757px;line-height:13px;height:13px">UnityEngine.MonoBehaviour:print(Object)</span>
<div style="left:827px;top:748px;width:28px;height:18px;border-radius:9px;background:#4f4f4f;border:1px solid #2a2a2a;text-align:center;line-height:17px;letter-spacing:0;box-shadow:inset 0 1px 0 #555">35</div>
<svg style="left:3px;top:781px;width:18px;height:17px" viewBox="0 0 18 17"><ellipse cx="9" cy="7.5" rx="8.5" ry="7" fill="#f4f4f4"/><path d="M10 13l3.5 4-.5-5z" fill="#f4f4f4"/><path d="M9 3v6" stroke="#3a3a3a" stroke-width="2"/><circle cx="9" cy="11.3" r="1.1" fill="#3a3a3a"/></svg>
<span class="t" style="left:29px;top:776px;line-height:13px;height:13px">destroyed</span>
<span class="t" style="left:29px;top:789px;line-height:13px;height:13px">UnityEngine.MonoBehaviour:print(Object)</span>
<div style="left:827px;top:780px;width:28px;height:18px;border-radius:9px;background:#4f4f4f;border:1px solid #2a2a2a;text-align:center;line-height:17px;letter-spacing:0;box-shadow:inset 0 1px 0 #555">16</div>
<div style="left:0;top:905px;width:861px;height:1px;background:#222"></div>
<!-- project.html -->
<div class="panel" style="left:865px;top:724px;width:645px;height:250px"></div>
<div class="tab" style="left:864px;top:707px;width:100px"><span class="tabtxt" style="left:23px">Project</span><svg style="left:9px;top:5px;width:10px;height:8px" viewBox="0 0 11 9"><path d="M.5 2.5V8.5h10V2.5H5.5L4.5.5H1.5z" fill="#6a6a6a" stroke="#7c7c7c"/></svg></div>
<svg style="left:1480px;top:713px;width:9px;height:10px" viewBox="0 0 9 10"><path d="M2.5 5V2.5a2 2 0 0 1 4 0" fill="none" stroke="#868686" stroke-width="1.2"/><rect x="0.5" y="4.5" width="7" height="5" fill="#868686"/></svg>
<svg class="menu" style="left:1493px;top:717px" viewBox="0 0 14 6"><path d="M0 1h5.4L2.7 4.2z" fill="#a8a8a8"/><path d="M6.5 .5h7.5M6.5 2.5h7.5M6.5 4.5h7.5" stroke="#b4b4b4" stroke-width="1"/></svg>
<div class="tbar" style="left:865px;top:724px;width:645px"></div>
<div style="left:870px;top:724px;width:1px;height:16px;background:#2a2a2a"></div>
<span class="t s" style="left:877px;top:725px">Create</span>
<svg style="left:916px;top:732px;width:5px;height:3px" viewBox="0 0 6 4"><path d="M0 0h6l-3 4z" fill="#8a8a8a"/></svg>
<div style="left:923px;top:724px;width:1px;height:16px;background:#2a2a2a"></div>
<div style="left:1128px;top:726px;width:299px;height:13px;border-radius:7px;background:#3f3f3f;border:1px solid #2a2a2a;box-shadow:inset 0 1px 1px #303030"></div>
<svg style="left:1132px;top:728px;width:10px;height:10px" viewBox="0 0 10 10"><circle cx="4" cy="4" r="2.8" fill="none" stroke="#8a8a8a" stroke-width="1.2"/><path d="M6 6l3 3" stroke="#8a8a8a" stroke-width="1.4"/></svg>
<div style="left:1437px;top:724px;width:1px;height:16px;background:#2a2a2a"></div>
<div style="left:1460px;top:724px;width:1px;height:16px;background:#2a2a2a"></div>
<div style="left:1483px;top:724px;width:1px;height:16px;background:#2a2a2a"></div>
<div style="left:1507px;top:724px;width:1px;height:16px;background:#2a2a2a"></div>
<svg style="left:1443px;top:727px;width:13px;height:11px" viewBox="0 0 13 11"><circle cx="7" cy="3" r="2.6" fill="#8a8a8a"/><path d="M1 10l3.5-5.5 3 5.5z" fill="#8a8a8a"/><rect x="7.5" y="6" width="4.5" height="4.5" fill="#8a8a8a"/></svg>
<svg style="left:1465px;top:727px;width:13px;height:12px" viewBox="0 0 13 12"><path d="M1 1h5l6 6-4.5 4.5L1 6z" fill="#8a8a8a"/><circle cx="3.5" cy="3.5" r="1" fill="#333"/></svg>
<svg style="left:1488px;top:727px;width:12px;height:11px" viewBox="0 0 12 11"><path d="M6 0l1.8 3.8 4.2.5-3.1 2.8.8 4L6 9.2 2.3 11.1l.8-4L0 4.3l4.2-.5z" fill="#6e6e6e"/></svg>
<div style="left:974px;top:741px;width:1px;height:233px;background:#2a2a2a"></div>
<div class="arrow" style="left:869px;top:747px;border-top-color:#6e6e6e"></div>
<svg style="left:881px;top:744px;width:13px;height:12px" viewBox="0 0 15 14"><path d="M7.5 0l2.2 4.7 5.3.6-3.9 3.5 1 5.2-4.6-2.6L2.9 14l1-5.2L0 5.3l5.3-.6z" fill="#f6d423" stroke="#e8b90e" stroke-width=".6"/></svg>
<span class="t b" style="left:897px;top:743px;color:#c4c4c4;letter-spacing:.5px">Favorites</span>
<svg style="left:894px;top:759px;width:15px;height:15px" viewBox="0 0 15 15"><circle cx="5.8" cy="6" r="4.5" fill="none" stroke="#7a6a10" stroke-width="2.6" opacity=".5"/><path d="M9.2 9.4l3.4 3.2" stroke="#f0d82c" stroke-width="2.5" stroke-linecap="round"/><circle cx="5.8" cy="6" r="4.5" fill="none" stroke="#f4e24a" stroke-width="1.7"/></svg>
<span class="t" style="left:912px;top:759px;width:63px;overflow:hidden">All Materials</span>
<svg style="left:894px;top:775px;width:15px;height:15px" viewBox="0 0 15 15"><circle cx="5.8" cy="6" r="4.5" fill="none" stroke="#7a6a10" stroke-width="2.6" opacity=".5"/><path d="M9.2 9.4l3.4 3.2" stroke="#f0d82c" stroke-width="2.5" stroke-linecap="round"/><circle cx="5.8" cy="6" r="4.5" fill="none" stroke="#f4e24a" stroke-width="1.7"/></svg>
<span class="t" style="left:912px;top:775px;width:63px;overflow:hidden">All Models</span>
<svg style="left:894px;top:791px;width:15px;height:15px" viewBox="0 0 15 15"><circle cx="5.8" cy="6" r="4.5" fill="none" stroke="#7a6a10" stroke-width="2.6" opacity=".5"/><path d="M9.2 9.4l3.4 3.2" stroke="#f0d82c" stroke-width="2.5" stroke-linecap="round"/><circle cx="5.8" cy="6" r="4.5" fill="none" stroke="#f4e24a" stroke-width="1.7"/></svg>
<span class="t" style="left:912px;top:791px;width:63px;overflow:hidden">All Prefabs</span>
<svg style="left:894px;top:807px;width:15px;height:15px" viewBox="0 0 15 15"><circle cx="5.8" cy="6" r="4.5" fill="none" stroke="#7a6a10" stroke-width="2.6" opacity=".5"/><path d="M9.2 9.4l3.4 3.2" stroke="#f0d82c" stroke-width="2.5" stroke-linecap="round"/><circle cx="5.8" cy="6" r="4.5" fill="none" stroke="#f4e24a" stroke-width="1.7"/></svg>
<span class="t" style="left:912px;top:807px;width:63px;overflow:hidden">All Scripts</span>
<div style="left:866px;top:838px;width:108px;height:16px;background:#444"></div>
<div class="arrow" style="left:869px;top:842px;border-top-color:#6e6e6e"></div>
<svg style="left:880px;top:839px;width:14px;height:12px" viewBox="0 0 14 12"><defs><linearGradient id="fg" x1="0" y1="0" x2="0" y2="1"><stop offset="0" stop-color="#93a2a4"/><stop offset="1" stop-color="#4c5b5e"/></linearGradient></defs><path d="M.5 2V11.5h13V3H6.5L5.5 1H1.5z" fill="#7d8a8c"/><path d="M1.5 1.5h4" stroke="#e4e8e8" stroke-width="1"/><path d="M.5 4h13v7.5H.5z" fill="url(#fg)"/><path d="M.5 4.2h13" stroke="#cdd5d6" stroke-width="1"/></svg>
<span class="t b" style="left:897px;top:838px;color:#e0e0e0;letter-spacing:.5px">Assets</span>
<div class="arrowr" style="left:884px;top:858px;border-left-color:#6e6e6e"></div>
<svg style="left:894px;top:855px;width:14px;height:12px" viewBox="0 0 14 12"><defs><linearGradient id="fg" x1="0" y1="0" x2="0" y2="1"><stop offset="0" stop-color="#93a2a4"/><stop offset="1" stop-color="#4c5b5e"/></linearGradient></defs><path d="M.5 2V11.5h13V3H6.5L5.5 1H1.5z" fill="#7d8a8c"/><path d="M1.5 1.5h4" stroke="#e4e8e8" stroke-width="1"/><path d="M.5 4h13v7.5H.5z" fill="url(#fg)"/><path d="M.5 4.2h13" stroke="#cdd5d6" stroke-width="1"/></svg>
<span class="t" style="left:912px;top:854px">Graphics</span>
<svg style="left:894px;top:871px;width:14px;height:12px" viewBox="0 0 14 12"><defs><linearGradient id="fg" x1="0" y1="0" x2="0" y2="1"><stop offset="0" stop-color="#93a2a4"/><stop offset="1" stop-color="#4c5b5e"/></linearGradient></defs><path d="M.5 2V11.5h13V3H6.5L5.5 1H1.5z" fill="#7d8a8c"/><path d="M1.5 1.5h4" stroke="#e4e8e8" stroke-width="1"/><path d="M.5 4h13v7.5H.5z" fill="url(#fg)"/><path d="M.5 4.2h13" stroke="#cdd5d6" stroke-width="1"/></svg>
<span class="t" style="left:912px;top:870px">Ostatní</span>
<svg style="left:894px;top:887px;width:14px;height:12px" viewBox="0 0 14 12"><defs><linearGradient id="fg" x1="0" y1="0" x2="0" y2="1"><stop offset="0" stop-color="#93a2a4"/><stop offset="1" stop-color="#4c5b5e"/></linearGradient></defs><path d="M.5 2V11.5h13V3H6.5L5.5 1H1.5z" fill="#7d8a8c"/><path d="M1.5 1.5h4" stroke="#e4e8e8" stroke-width="1"/><path d="M.5 4h13v7.5H.5z" fill="url(#fg)"/><path d="M.5 4.2h13" stroke="#cdd5d6" stroke-width="1"/></svg>
<span class="t" style="left:912px;top:886px">Prefab</span>
<svg style="left:894px;top:903px;width:14px;height:12px" viewBox="0 0 14 12"><defs><linearGradient id="fg" x1="0" y1="0" x2="0" y2="1"><stop offset="0" stop-color="#93a2a4"/><stop offset="1" stop-color="#4c5b5e"/></linearGradient></defs><path d="M.5 2V11.5h13V3H6.5L5.5 1H1.5z" fill="#7d8a8c"/><path d="M1.5 1.5h4" stroke="#e4e8e8" stroke-width="1"/><path d="M.5 4h13v7.5H.5z" fill="url(#fg)"/><path d="M.5 4.2h13" stroke="#cdd5d6" stroke-width="1"/></svg>
<span class="t" style="left:912px;top:902px">Scenes</span>
<svg style="left:894px;top:919px;width:14px;height:12px" viewBox="0 0 14 12"><defs><linearGradient id="fg" x1="0" y1="0" x2="0" y2="1"><stop offset="0" stop-color="#93a2a4"/><stop offset="1" stop-color="#4c5b5e"/></linearGradient></defs><path d="M.5 2V11.5h13V3H6.5L5.5 1H1.5z" fill="#7d8a8c"/><path d="M1.5 1.5h4" stroke="#e4e8e8" stroke-width="1"/><path d="M.5 4h13v7.5H.5z" fill="url(#fg)"/><path d="M.5 4.2h13" stroke="#cdd5d6" stroke-width="1"/></svg>
<span class="t" style="left:912px;top:918px">Scripts</span>
<div style="left:975px;top:741px;width:535px;height:18px;background:#3a3a3a"></div>
<div style="left:975px;top:759px;width:535px;height:1px;background:#2a2a2a"></div>
<span class="t b" style="left:981px;top:743px;color:#c4c4c4;letter-spacing:.5px">Assets</span>
<svg style="left:1029px;top:748px;width:5px;height:7px" viewBox="0 0 5 7"><path d="M0 0v7l5-3.5z" fill="#8a8a8a"/></svg>
<span class="t s" style="left:981px;top:767px;width:80px;text-align:center">Graphics</span>
<span class="t s" style="left:1052px;top:767px;width:80px;text-align:center">Ostatní</span>
<span class="t s" style="left:1123px;top:767px;width:80px;text-align:center">Prefab</span>
<span class="t s" style="left:1195px;top:767px;width:80px;text-align:center">Scenes</span>
<span class="t s" style="left:1266px;top:767px;width:80px;text-align:center">Scripts</span>
<span class="t s" style="left:1337px;top:767px;width:80px;text-align:center">BackFro<span style="position:static;font-size:6px;letter-spacing:0">…</span></span>
<span class="t s" style="left:1408px;top:767px;width:80px;text-align:center">BGMover</span>
<div style="left:1359px;top:760px;width:37px;height:3px;background:#e6e8ea"></div>
<div style="left:1430px;top:760px;width:37px;height:3px;background:#e6e8ea"></div>
<svg style="left:1003px;top:799px;width:37px;height:48px" viewBox="0 0 37 48"><defs><linearGradient id="pg" x1="0" y1="0" x2="1" y2="1"><stop offset="0" stop-color="#f2f4f6"/><stop offset="1" stop-color="#d3d8dc"/></linearGradient><linearGradient id="cg" x1="0" y1="0" x2="1" y2="0"><stop offset="0" stop-color="#4fa3cb"/><stop offset=".6" stop-color="#7cc3e2"/><stop offset="1" stop-color="#5aafd6"/></linearGradient></defs><path d="M0 1h26c4 .3 8 1.5 10 3.5V48H0z" fill="url(#pg)"/><path d="M28 1.3c1.8 1.5 2.2 3.8 1.6 7l6.4-3.3c-2-2.2-5-3.3-8-3.7z" fill="#fbfcfd" stroke="#c4cace" stroke-width=".5"/><text x="6" y="42.5" font-family="Liberation Sans,sans-serif" font-weight="bold" font-size="30" fill="url(#cg)" textLength="12" lengthAdjust="spacingAndGlyphs">C</text><text x="19" y="40" font-family="Liberation Sans,sans-serif" font-weight="bold" font-size="24" fill="#3c94c4" textLength="11.5" lengthAdjust="spacingAndGlyphs">#</text></svg>
<span class="t s" style="left:981px;top:850px;width:80px;text-align:center">CameraFo<span style="position:static;font-size:6px;letter-spacing:0">…</span></span>
<svg style="left:1074px;top:799px;width:37px;height:48px" viewBox="0 0 37 48"><path d="M0 1h26c4 .3 8 1.5 10 3.5V48H0z" fill="url(#pg)"/><path d="M28 1.3c1.8 1.5 2.2 3.8 1.6 7l6.4-3.3c-2-2.2-5-3.3-8-3.7z" fill="#fbfcfd" stroke="#c4cace" stroke-width=".5"/><text x="6" y="42.5" font-family="Liberation Sans,sans-serif" font-weight="bold" font-size="30" fill="url(#cg)" textLength="12" lengthAdjust="spacingAndGlyphs">C</text><text x="19" y="40" font-family="Liberation Sans,sans-serif" font-weight="bold" font-size="24" fill="#3c94c4" textLength="11.5" lengthAdjust="spacingAndGlyphs">#</text></svg>
<span class="t s" style="left:1052px;top:850px;width:80px;text-align:center">EndScript</span>
<svg style="left:1145px;top:799px;width:37px;height:48px" viewBox="0 0 37 48"><path d="M0 1h26c4 .3 8 1.5 10 3.5V48H0z" fill="url(#pg)"/><path d="M28 1.3c1.8 1.5 2.2 3.8 1.6 7l6.4-3.3c-2-2.2-5-3.3-8-3.7z" fill="#fbfcfd" stroke="#c4cace" stroke-width=".5"/><text x="6" y="42.5" font-family="Liberation Sans,sans-serif" font-weight="bold" font-size="30" fill="url(#cg)" textLength="12" lengthAdjust="spacingAndGlyphs">C</text><text x="19" y="40" font-family="Liberation Sans,sans-serif" font-weight="bold" font-size="24" fill="#3c94c4" textLength="11.5" lengthAdjust="spacingAndGlyphs">#</text></svg>
<span class="t s" style="left:1123px;top:850px;width:80px;text-align:center">EraserScr<span style="position:static;font-size:6px;letter-spacing:0">…</span></span>
<svg style="left:1217px;top:799px;width:37px;height:48px" viewBox="0 0 37 48"><path d="M0 1h26c4 .3 8 1.5 10 3.5V48H0z" fill="url(#pg)"/><path d="M28 1.3c1.8 1.5 2.2 3.8 1.6 7l6.4-3.3c-2-2.2-5-3.3-8-3.7z" fill="#fbfcfd" stroke="#c4cace" stroke-width=".5"/><text x="6" y="42.5" font-family="Liberation Sans,sans-serif" font-weight="bold" font-size="30" fill="url(#cg)" textLength="12" lengthAdjust="spacingAndGlyphs">C</text><text x="19" y="40" font-family="Liberation Sans,sans-serif" font-weight="bold" font-size="24" fill="#3c94c4" textLength="11.5" lengthAdjust="spacingAndGlyphs">#</text></svg>
<span class="t s" style="left:1195px;top:850px;width:80px;text-align:center">GUITextu<span style="position:static;font-size:6px;letter-spacing:0">…</span></span>
<svg style="left:1288px;top:799px;width:37px;height:48px" viewBox="0 0 37 48"><path d="M0 1h26c4 .3 8 1.5 10 3.5V48H0z" fill="url(#pg)"/><path d="M28 1.3c1.8 1.5 2.2 3.8 1.6 7l6.4-3.3c-2-2.2-5-3.3-8-3.7z" fill="#fbfcfd" stroke="#c4cace" stroke-width=".5"/><text x="6" y="42.5" font-family="Liberation Sans,sans-serif" font-weight="bold" font-size="30" fill="url(#cg)" textLength="12" lengthAdjust="spacingAndGlyphs">C</text><text x="19" y="40" font-family="Liberation Sans,sans-serif" font-weight="bold" font-size="24" fill="#3c94c4" textLength="11.5" lengthAdjust="spacingAndGlyphs">#</text></svg>
<span class="t s" style="left:1266px;top:850px;width:80px;text-align:center">HealthScr<span style="position:static;font-size:6px;letter-spacing:0">…</span></span>
<svg style="left:1359px;top:799px;width:37px;height:48px" viewBox="0 0 37 48"><path d="M0 1h26c4 .3 8 1.5 10 3.5V48H0z" fill="url(#pg)"/><path d="M28 1.3c1.8 1.5 2.2 3.8 1.6 7l6.4-3.3c-2-2.2-5-3.3-8-3.7z" fill="#fbfcfd" stroke="#c4cace" stroke-width=".5"/><text x="6" y="42.5" font-family="Liberation Sans,sans-serif" font-weight="bold" font-size="30" fill="url(#cg)" textLength="12" lengthAdjust="spacingAndGlyphs">C</text><text x="19" y="40" font-family="Liberation Sans,sans-serif" font-weight="bold" font-size="24" fill="#3c94c4" textLength="11.5" lengthAdjust="spacingAndGlyphs">#</text></svg>
<span class="t s" style="left:1337px;top:850px;width:80px;text-align:center">Highscor<span style="position:static;font-size:6px;letter-spacing:0">…</span></span>
<svg style="left:1430px;top:799px;width:37px;height:48px" viewBox="0 0 37 48"><path d="M0 1h26c4 .3 8 1.5 10 3.5V48H0z" fill="url(#pg)"/><path d="M28 1.3c1.8 1.5 2.2 3.8 1.6 7l6.4-3.3c-2-2.2-5-3.3-8-3.7z" fill="#fbfcfd" stroke="#c4cace" stroke-width=".5"/><text x="6" y="42.5" font-family="Liberation Sans,sans-serif" font-weight="bold" font-size="30" fill="url(#cg)" textLength="12" lengthAdjust="spacingAndGlyphs">C</text><text x="19" y="40" font-family="Liberation Sans,sans-serif" font-weight="bold" font-size="24" fill="#3c94c4" textLength="11.5" lengthAdjust="spacingAndGlyphs">#</text></svg>
<span class="t s" style="left:1408px;top:850px;width:80px;text-align:center">OnGUISc<span style="position:static;font-size:6px;letter-spacing:0">…</span></span>
<svg style="left:1003px;top:882px;width:37px;height:48px" viewBox="0 0 37 48"><path d="M0 1h26c4 .3 8 1.5 10 3.5V48H0z" fill="url(#pg)"/><path d="M28 1.3c1.8 1.5 2.2 3.8 1.6 7l6.4-3.3c-2-2.2-5-3.3-8-3.7z" fill="#fbfcfd" stroke="#c4cace" stroke-width=".5"/><text x="6" y="42.5" font-family="Liberation Sans,sans-serif" font-weight="bold" font-size="30" fill="url(#cg)" textLength="12" lengthAdjust="spacingAndGlyphs">C</text><text x="19" y="40" font-family="Liberation Sans,sans-serif" font-weight="bold" font-size="24" fill="#3c94c4" textLength="11.5" lengthAdjust="spacingAndGlyphs">#</text></svg>
<span class="t s" style="left:981px;top:933px;width:80px;text-align:center">PanelMa<span style="position:static;font-size:6px;letter-spacing:0">…</span></span>
<svg style="left:1074px;top:882px;width:37px;height:48px" viewBox="0 0 37 48"><path d="M0 1h26c4 .3 8 1.5 10 3.5V48H0z" fill="url(#pg)"/><path d="M28 1.3c1.8 1.5 2.2 3.8 1.6 7l6.4-3.3c-2-2.2-5-3.3-8-3.7z" fill="#fbfcfd" stroke="#c4cace" stroke-width=".5"/><text x="6" y="42.5" font-family="Liberation Sans,sans-serif" font-weight="bold" font-size="30" fill="url(#cg)" textLength="12" lengthAdjust="spacingAndGlyphs">C</text><text x="19" y="40" font-family="Liberation Sans,sans-serif" font-weight="bold" font-size="24" fill="#3c94c4" textLength="11.5" lengthAdjust="spacingAndGlyphs">#</text></svg>
<span class="t s" style="left:1052px;top:933px;width:80px;text-align:center">PlayerCol<span style="position:static;font-size:6px;letter-spacing:0">…</span></span>
<svg style="left:1145px;top:882px;width:37px;height:48px" viewBox="0 0 37 48"><path d="M0 1h26c4 .3 8 1.5 10 3.5V48H0z" fill="url(#pg)"/><path d="M28 1.3c1.8 1.5 2.2 3.8 1.6 7l6.4-3.3c-2-2.2-5-3.3-8-3.7z" fill="#fbfcfd" stroke="#c4cace" stroke-width=".5"/><text x="6" y="42.5" font-family="Liberation Sans,sans-serif" font-weight="bold" font-size="30" fill="url(#cg)" textLength="12" lengthAdjust="spacingAndGlyphs">C</text><text x="19" y="40" font-family="Liberation Sans,sans-serif" font-weight="bold" font-size="24" fill="#3c94c4" textLength="11.5" lengthAdjust="spacingAndGlyphs">#</text></svg>
<span class="t s" style="left:1123px;top:933px;width:80px;text-align:center">Raycast<span style="position:static;font-size:6px;letter-spacing:0">…</span></span>
<svg style="left:1217px;top:882px;width:37px;height:48px" viewBox="0 0 37 48"><path d="M0 1h26c4 .3 8 1.5 10 3.5V48H0z" fill="url(#pg)"/><path d="M28 1.3c1.8 1.5 2.2 3.8 1.6 7l6.4-3.3c-2-2.2-5-3.3-8-3.7z" fill="#fbfcfd" stroke="#c4cace" stroke-width=".5"/><text x="6" y="42.5" font-family="Liberation Sans,sans-serif" font-weight="bold" font-size="30" fill="url(#cg)" textLength="12" lengthAdjust="spacingAndGlyphs">C</text><text x="19" y="40" font-family="Liberation Sans,sans-serif" font-weight="bold" font-size="24" fill="#3c94c4" textLength="11.5" lengthAdjust="spacingAndGlyphs">#</text></svg>
<span class="t s" style="left:1195px;top:933px;width:80px;text-align:center">Reaction<span style="position:static;font-size:6px;letter-spacing:0">…</span></span>
<svg style="left:1288px;top:882px;width:37px;height:48px" viewBox="0 0 37 48"><path d="M0 1h26c4 .3 8 1.5 10 3.5V48H0z" fill="url(#pg)"/><path d="M28 1.3c1.8 1.5 2.2 3.8 1.6 7l6.4-3.3c-2-2.2-5-3.3-8-3.7z" fill="#fbfcfd" stroke="#c4cace" stroke-width=".5"/><text x="6" y="42.5" font-family="Liberation Sans,sans-serif" font-weight="bold" font-size="30" fill="url(#cg)" textLength="12" lengthAdjust="spacingAndGlyphs">C</text><text x="19" y="40" font-family="Liberation Sans,sans-serif" font-weight="bold" font-size="24" fill="#3c94c4" textLength="11.5" lengthAdjust="spacingAndGlyphs">#</text></svg>
<span class="t s" style="left:1266px;top:933px;width:80px;text-align:center">ScorerScr<span style="position:static;font-size:6px;letter-spacing:0">…</span></span>
<svg style="left:1359px;top:882px;width:37px;height:48px" viewBox="0 0 37 48"><path d="M0 1h26c4 .3 8 1.5 10 3.5V48H0z" fill="url(#pg)"/><path d="M28 1.3c1.8 1.5 2.2 3.8 1.6 7l6.4-3.3c-2-2.2-5-3.3-8-3.7z" fill="#fbfcfd" stroke="#c4cace" stroke-width=".5"/><text x="6" y="42.5" font-family="Liberation Sans,sans-serif" font-weight="bold" font-size="30" fill="url(#cg)" textLength="12" lengthAdjust="spacingAndGlyphs">C</text><text x="19" y="40" font-family="Liberation Sans,sans-serif" font-weight="bold" font-size="24" fill="#3c94c4" textLength="11.5" lengthAdjust="spacingAndGlyphs">#</text></svg>
<span class="t s" style="left:1337px;top:933px;width:80px;text-align:center">ScoreScr<span style="position:static;font-size:6px;letter-spacing:0">…</span></span>
<svg style="left:1430px;top:882px;width:37px;height:48px" viewBox="0 0 37 48"><path d="M0 1h26c4 .3 8 1.5 10 3.5V48H0z" fill="url(#pg)"/><path d="M28 1.3c1.8 1.5 2.2 3.8 1.6 7l6.4-3.3c-2-2.2-5-3.3-8-3.7z" fill="#fbfcfd" stroke="#c4cace" stroke-width=".5"/><text x="6" y="42.5" font-family="Liberation Sans,sans-serif" font-weight="bold" font-size="30" fill="url(#cg)" textLength="12" lengthAdjust="spacingAndGlyphs">C</text><text x="19" y="40" font-family="Liberation Sans,sans-serif" font-weight="bold" font-size="24" fill="#3c94c4" textLength="11.5" lengthAdjust="spacingAndGlyphs">#</text></svg>
<span class="t s" style="left:1408px;top:933px;width:80px;text-align:center">StalagScr<span style="position:static;font-size:6px;letter-spacing:0">…</span></span>
<div style="left:1495px;top:760px;width:15px;height:197px;background:#343434;border-left:1px solid #2a2a2a"></div>
<svg style="left:1499px;top:765px;width:6px;height:4px" viewBox="0 0 8 6"><path d="M0 6h8L4 0z" fill="#1e1e1e"/></svg>
<svg style="left:1499px;top:948px;width:6px;height:4px" viewBox="0 0 8 6"><path d="M0 0h8L4 6z" fill="#1e1e1e"/></svg>
<div style="left:1496px;top:811px;width:13px;height:128px;border-radius:7px;background:linear-gradient(90deg,#555,#424242);border:1px solid #2c2c2c"></div>
<div style="left:975px;top:957px;width:535px;height:1px;background:#2a2a2a"></div>
<div style="left:975px;top:958px;width:535px;height:16px;background:#3a3a3a"></div>
<div style="left:1440px;top:965px;width:54px;height:2px;background:#2a2a2a;border-bottom:1px solid #4a4a4a"></div>
<div style="left:1460px;top:960px;width:10px;height:10px;border-radius:5px;background:#6e6e6e;border:1px solid #3a3a3a"></div>
<!-- status.html -->
<div style="left:0;top:974px;width:1918px;height:20px;background:#292929"></div>
<svg style="left:1px;top:979px;width:14px;height:13px" viewBox="0 0 18 17"><ellipse cx="9" cy="7.5" rx="8.5" ry="7" fill="#f4f4f4"/><path d="M10 13l3.5 4-.5-5z" fill="#f4f4f4"/><path d="M9 3v6" stroke="#3a3a3a" stroke-width="2"/><circle cx="9" cy="11.3" r="1.1" fill="#3a3a3a"/></svg>
<span class="t" style="left:18px;top:979px">destroyed</span>
</div>
</body></html>
